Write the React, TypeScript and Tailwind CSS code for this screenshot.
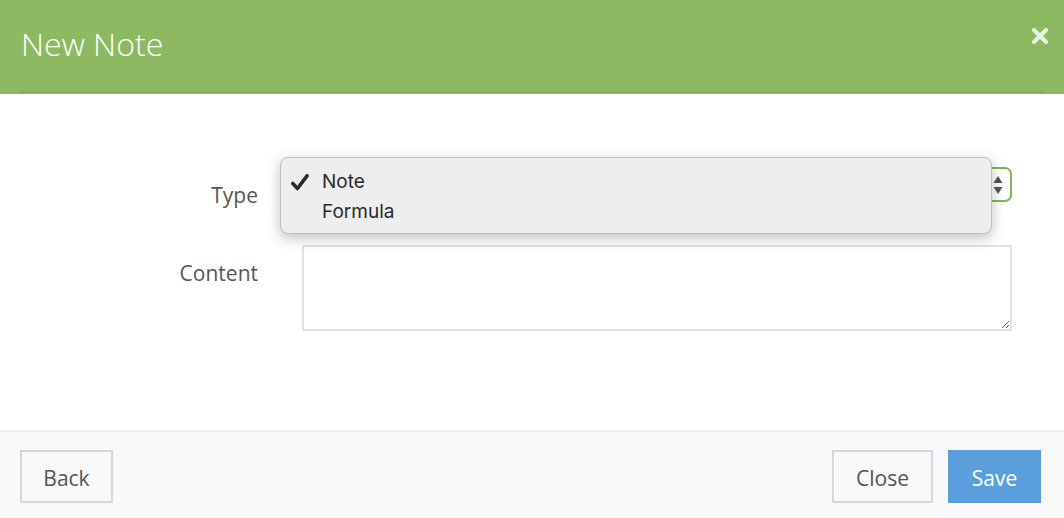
import React from 'react';

const font = { fontFamily: '"Open Sans", "DejaVu Sans", sans-serif' };
const sysFont = { fontFamily: 'Inter, "Open Sans", sans-serif' };

const FooterButton = ({ label, width, primary }: { label: string; width: string; primary?: boolean }) => (
  <button
    className={`h-[53px] ${width} pt-[3px] text-[21px] leading-none border-2 ${
      primary ? 'bg-[#5a9fdc] border-[#5a9fdc] text-white' : 'bg-[#f9f9f9] border-[#cfd9e3] text-[#555]'
    }`}
  >
    {label}
  </button>
);

export default function App() {
  return (
    <div className="w-[1064px] h-[518px] bg-white flex flex-col overflow-hidden" style={font}>
      {/* header */}
      <div className="relative bg-[#8cb962] h-[94px] shrink-0 px-5">
        <div className="h-[93px] border-b-[2px] border-[#84ad5c] flex items-start">
          <h1 className="text-[32px] font-light text-white mt-[24px] ml-[1px] leading-[40px]">New Note</h1>
        </div>
        <button className="absolute right-[15px] top-[27px] text-[#eaf2df]">
          <svg width="18" height="18" viewBox="0 0 18 18">
            <path d="M3 3 L15 15 M15 3 L3 15" stroke="currentColor" strokeWidth="4.2" strokeLinecap="round" />
          </svg>
        </button>
      </div>

      {/* body */}
      <div className="flex-1 pt-[73px] flex flex-col gap-[35px]">
        <div className="flex">
          <label className="w-[258px] text-right text-[21px] text-[#555] pt-[13px] leading-[30px]">Type</label>
          <div className="relative ml-[44px] w-[710px]">
            <div className="h-[35px] border-2 border-[#7fb556] rounded-[7px] bg-white flex items-center justify-end pr-[7px]">
              <svg width="10" height="22" viewBox="0 0 10 22">
                <path d="M5 2 L9.5 9 H0.5 Z" fill="#555" />
                <path d="M0.5 13 H9.5 L5 20 Z" fill="#555" />
              </svg>
            </div>
            {/* open option menu */}
            <div
              className="absolute left-[-22px] top-[-10px] w-[712px] h-[77px] bg-[#eeeeee] border border-[#bdbdbd] rounded-[8px] shadow-[0_4px_14px_rgba(0,0,0,0.25)] pt-[10px] text-[19px] text-[#2a2a2a]"
              style={sysFont}
            >
              <div className="flex items-center h-[28px]">
                <svg className="ml-[10px] mr-[13px]" width="18" height="17" viewBox="0 0 18 17">
                  <path d="M1.8 9.5 L6.5 14.5 L16 1.8" fill="none" stroke="#2a2a2a" strokeWidth="3.6" strokeLinecap="round" strokeLinejoin="round" />
                </svg>
                <span>Note</span>
              </div>
              <div className="flex items-center h-[32px] pl-[41px]">Formula</div>
            </div>
          </div>
        </div>

        <div className="flex">
          <label className="w-[258px] text-right text-[21px] text-[#555] pt-[13px] leading-[30px]">Content</label>
          <textarea className="ml-[44px] w-[710px] h-[86px] border-2 border-[#e2e2e2] outline-none resize-y" />
        </div>
      </div>

      {/* footer */}
      <div className="h-[88px] shrink-0 bg-[#f9f9f9] border-t-2 border-[#efefef] px-5 pt-[18px] flex justify-between items-start">
        <FooterButton label="Back" width="w-[93px]" />
        <div className="flex gap-[15px] mr-[3px]">
          <FooterButton label="Close" width="w-[101px]" />
          <FooterButton label="Save" width="w-[93px]" primary />
        </div>
      </div>
    </div>
  );
}
